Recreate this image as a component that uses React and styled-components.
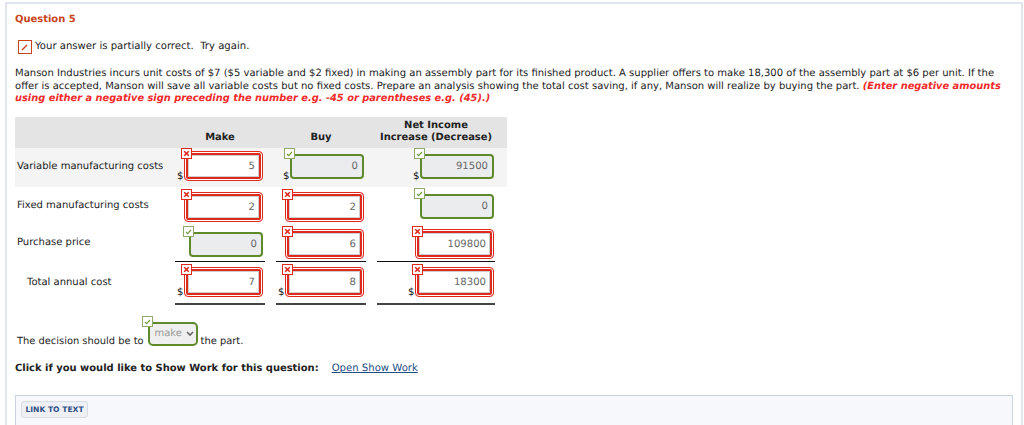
import React from 'react'
import styled, { createGlobalStyle } from 'styled-components'

const GlobalStyle = createGlobalStyle`
  html, body { margin: 0; padding: 0; background: #fff; }
  body { font-family: "DejaVu Sans", Verdana, sans-serif; font-size: 10.1px; color: #222; text-rendering: geometricPrecision; }
  b { font-size: 9.95px; }
`
const Page = styled.div`
  width: 1024px;
  height: 425px;
  overflow: hidden;
  box-sizing: border-box;
  padding: 2px 1px 0 5px;
`
const Card = styled.div`
  border: 2px solid #dfe6ef;
  border-bottom: none;
  height: 423px;
  box-sizing: border-box;
  padding: 9px 8px 0 8px;
  background: #fff;
`
const Title = styled.h2`
  margin: 0;
  font-size: 9.95px;
  line-height: 14px;
  font-weight: bold;
  color: #c8441a;
`
const Status = styled.div`
  display: flex;
  align-items: center;
  gap: 3px;
  margin: 13px 0 0 3px;
  height: 14px;
  line-height: 14px;
`
const Prompt = styled.p`
  margin: 14px 0 0;
  height: 38px;
  font-size: 10.03px;
  line-height: 12.7px;
`
const Hint = styled.b`
  color: #f02a2a;
  font-style: italic;
  font-size: 9.85px;
`
const Table = styled.div`
  display: grid;
  grid-template-columns: 160px 101px 101px 130px;
  width: 492px;
  margin-top: 11px;
`
const Head = styled.div`
  grid-column: 1 / -1;
  display: grid;
  grid-template-columns: subgrid;
  height: 31px;
  background: #e4e4e4;
  font-weight: bold;
  font-size: 9.95px;
`
const HeadCell = styled.div`
  display: flex;
  align-items: flex-end;
  justify-content: center;
  text-align: center;
  line-height: 12px;
  padding: 0 ${p => p.$right || 0}px 4px 0;
`
const Row = styled.div`
  grid-column: 1 / -1;
  display: grid;
  grid-template-columns: subgrid;
  height: ${p => p.$h}px;
  background: ${p => (p.$shade ? '#f4f4f4' : 'transparent')};
`
const Label = styled.div`
  display: flex;
  align-items: center;
  font-size: 10px;
  padding-left: ${p => (p.$indent ? 12 : 2)}px;
  height: ${p => p.$h || 36}px;
`
const Cell = styled.div`
  padding-left: ${p => p.$pad}px;
  padding-top: ${p => p.$top || 0}px;
`
const TotalCell = styled.div`
  box-sizing: border-box;
  width: ${p => p.$w}px;
  height: 44px;
  padding: 5px 0 0 ${p => p.$pad}px;
  border-top: 1px solid #111;
  border-bottom: 2px solid #444;
`
const Field = styled.div`
  position: relative;
  box-sizing: border-box;
  width: 79px;
  height: 30px;
  display: flex;
  align-items: center;
  justify-content: flex-end;
  padding-right: 7px;
  border-radius: 4px;
  color: #666;
  background: #fff;
  border: 1px solid #e0291d;
  box-shadow: inset 0 0 0 1px #fff, inset 0 0 0 3px #e0291d, inset 0 0 0 4px #cfcfcf;
`
const OkField = styled.div`
  position: relative;
  box-sizing: border-box;
  width: 74px;
  height: 25px;
  margin: ${p => p.$top ?? 3}px 0 0 5px;
  display: flex;
  align-items: center;
  justify-content: flex-end;
  padding-right: 4px;
  border-radius: 4px;
  color: #666;
  background: #ebecee;
  border: 2px solid #5f8a2c;
`
const Dollar = styled.span`
  position: absolute;
  left: ${p => p.$left}px;
  bottom: ${p => p.$bottom}px;
  line-height: 10px;
  color: #111;
`
const MarkBox = styled.span`
  position: absolute;
  left: ${p => p.$left}px;
  top: ${p => p.$top}px;
  box-sizing: border-box;
  width: 11px;
  height: 11px;
  display: block;
  background: #fff;
  border: 1px solid ${p => (p.$ok ? '#8faa68' : '#e0291d')};
`
const Decision = styled.div`
  display: flex;
  align-items: flex-end;
  margin: 17px 0 0 2px;
  height: 27px;
  font-size: 9.9px;
  line-height: 14px;
`
const Select = styled.div`
  position: relative;
  align-self: flex-start;
  box-sizing: border-box;
  width: 50px;
  height: 24px;
  margin: 0 3px 0 4px;
  padding: 0 0 0 5px;
  display: flex;
  align-items: center;
  gap: 4px;
  color: #999;
  background: #efefef;
  border: 2px solid #5f8a2c;
  border-radius: 5px;
`
const ShowWork = styled.div`
  display: flex;
  margin-top: 13px;
  line-height: 14px;
  gap: 13px;
`
const WorkLink = styled.a`
  color: #1d4f85;
  text-decoration: underline;
`
const TextBar = styled.div`
  margin-top: 19px;
  height: 40px;
  padding: 5px;
  box-sizing: border-box;
  background: #f7f8fb;
  border: 1px solid #ccd3e0;
`
const LinkButton = styled.div`
  display: inline-block;
  box-sizing: border-box;
  width: 67px;
  height: 17px;
  text-align: center;
  font-size: 7.6px;
  line-height: 15px;
  font-weight: bold;
  color: #2f4f86;
  background: #eef0f5;
  border: 1px solid #d8dce5;
  border-radius: 3px;
`

const Mark = ({ ok, left, top }) => (
  <MarkBox $ok={ok} $left={left} $top={top}>
    <svg width="9" height="9" viewBox="0 0 9 9" style={{ display: 'block' }}>
      {ok
        ? <path d="M2 5l1.6 1.6L7 3" fill="none" stroke="#6f9a35" strokeWidth="1.1" />
        : <path d="M2.2 2.2l4.6 4.6M6.8 2.2L2.2 6.8" fill="none" stroke="#e0291d" strokeWidth="1.6" />}
    </svg>
  </MarkBox>
)

const Bad = ({ value, dollar }) => (
  <Field>
    {value}
    {dollar && <Dollar $left={-8} $bottom={-2}>$</Dollar>}
    <Mark left={-4} top={-4} />
  </Field>
)

const Good = ({ value, dollar, top }) => (
  <OkField $top={top}>
    {value}
    {dollar && <Dollar $left={-9} $bottom={-5}>$</Dollar>}
    <Mark ok left={-8} top={-8} />
  </OkField>
)

export default function App() {
  return (
    <Page>
      <GlobalStyle />
      <Card>
        <Title>Question 5</Title>
        <Status>
          <svg width="14" height="14" viewBox="0 0 14 14">
            <rect x="0.5" y="0.5" width="13" height="13" fill="#fff" stroke="#c8441a" />
            <path d="M4 10l5-5" stroke="#c8441a" strokeWidth="1.5" />
          </svg>
          Your answer is partially correct.&nbsp; Try again.
        </Status>
        <Prompt>
          Manson Industries incurs unit costs of $7 ($5 variable and $2 fixed) in making an assembly part for its finished product. A supplier offers to make 18,300 of the assembly part at $6 per unit. If the offer is accepted, Manson will save all variable costs but no fixed costs. Prepare an analysis showing the total cost saving, if any, Manson will realize by buying the part. <Hint>(Enter negative amounts using either a negative sign preceding the number e.g. -45 or parentheses e.g. (45).)</Hint>
        </Prompt>
        <Table>
          <Head>
            <HeadCell />
            <HeadCell $right={11}>Make</HeadCell>
            <HeadCell $right={11}>Buy</HeadCell>
            <HeadCell $right={12}>Net Income<br />Increase (Decrease)</HeadCell>
          </Head>
          <Row $h={39} $shade>
            <Label>Variable manufacturing costs</Label>
            <Cell $pad={9} $top={3}><Bad value="5" dollar /></Cell>
            <Cell $pad={9} $top={3}><Good value="0" dollar /></Cell>
            <Cell $pad={38} $top={3}><Good value="91500" dollar /></Cell>
          </Row>
          <Row $h={38}>
            <Label>Fixed manufacturing costs</Label>
            <Cell $pad={9} $top={5}><Bad value="2" /></Cell>
            <Cell $pad={9} $top={5}><Bad value="2" /></Cell>
            <Cell $pad={38} $top={5}><Good value="0" top={2} /></Cell>
          </Row>
          <Row $h={36}>
            <Label $h={35}>Purchase price</Label>
            <Cell $pad={9} $top={4}><Good value="0" /></Cell>
            <Cell $pad={9} $top={4}><Bad value="6" /></Cell>
            <Cell $pad={38} $top={4}><Bad value="109800" /></Cell>
          </Row>
          <Row $h={44}>
            <Label $indent $h={42}>Total annual cost</Label>
            <TotalCell $w={90} $pad={9}><Bad value="7" dollar /></TotalCell>
            <TotalCell $w={90} $pad={9}><Bad value="8" dollar /></TotalCell>
            <TotalCell $w={118} $pad={38}><Bad value="18300" dollar /></TotalCell>
          </Row>
        </Table>
        <Decision>
          The decision should be to
          <Select>
            make
            <svg width="8" height="6" viewBox="0 0 8 6"><path d="M1 1l3 3 3-3" fill="none" stroke="#666" strokeWidth="1.6" /></svg>
            <Mark ok left={-8} top={-8} />
          </Select>
          the part.
        </Decision>
        <ShowWork>
          <b>Click if you would like to Show Work for this question:</b>
          <WorkLink href="#">Open Show Work</WorkLink>
        </ShowWork>
        <TextBar><LinkButton>LINK TO TEXT</LinkButton></TextBar>
      </Card>
    </Page>
  )
}
